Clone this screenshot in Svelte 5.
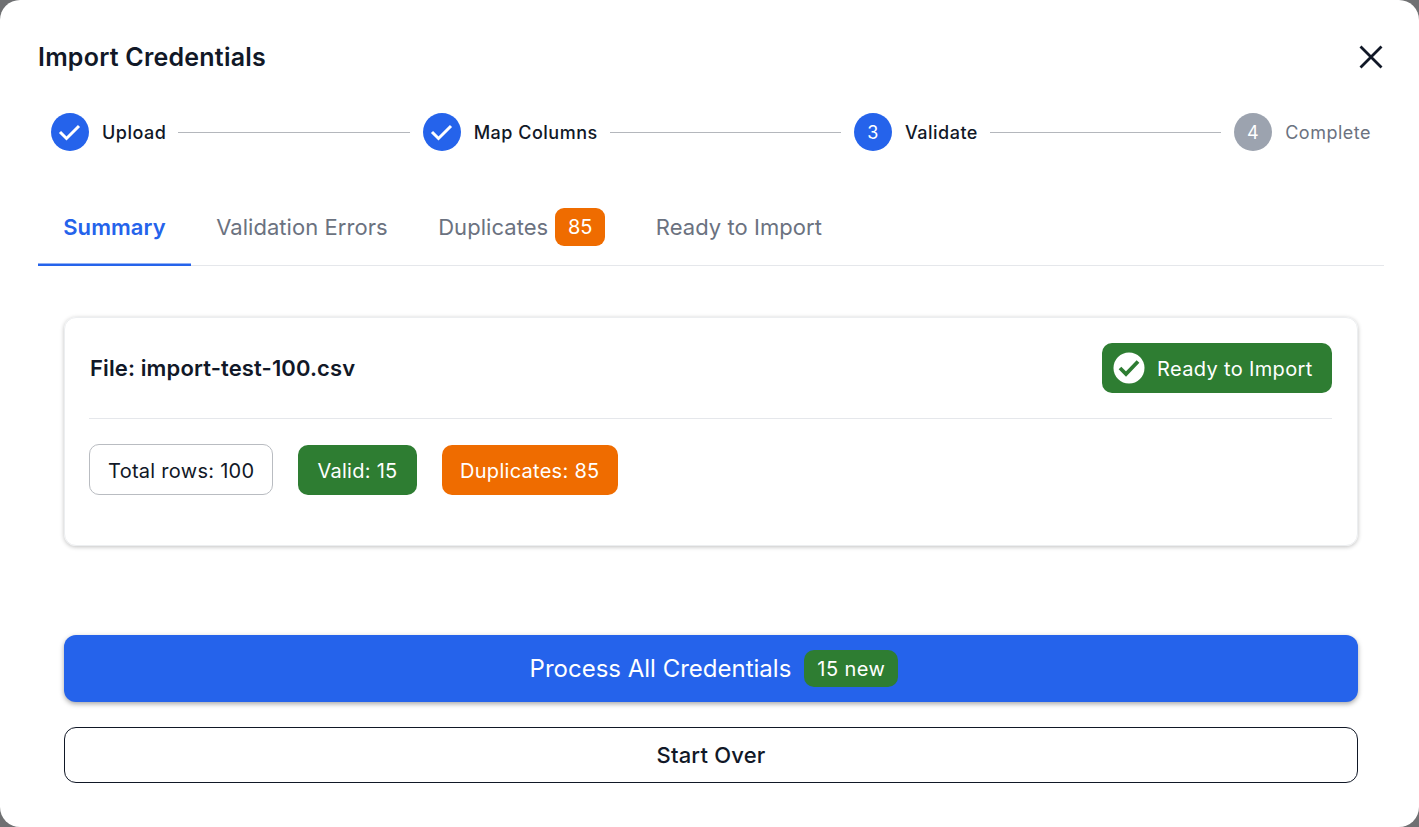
<script>
    const steps = [
        { label: "Upload", state: "done" },
        { label: "Map Columns", state: "done" },
        { label: "Validate", state: "active", num: 3 },
        { label: "Complete", state: "todo", num: 4 },
    ];
    const tabs = [
        { label: "Summary", active: true },
        { label: "Validation Errors" },
        { label: "Duplicates", badge: 85 },
        { label: "Ready to Import" },
    ];
</script>

<div class="backdrop">
    <main class="dialog">
        <header class="title-row">
            <h1>Import Credentials</h1>
            <button class="close" aria-label="Close">
                <svg width="24" height="24" viewBox="0 0 24 24" fill="none" stroke="#111827" stroke-width="2.8">
                    <path d="M1.5 1.5 22.5 22.5M22.5 1.5 1.5 22.5" />
                </svg>
            </button>
        </header>

        <ol class="stepper">
            {#each steps as step, i}
                {#if i > 0}
                    <li class="line" aria-hidden="true"></li>
                {/if}
                <li class="step {step.state}">
                    <span class="circle">
                        {#if step.state === "done"}
                            <svg width="24" height="24" viewBox="0 0 24 24" fill="none" stroke="#fff" stroke-width="3">
                                <path d="M2 12 8.5 18.5 21 6" />
                            </svg>
                        {:else}
                            {step.num}
                        {/if}
                    </span>
                    <span class="step-label">{step.label}</span>
                </li>
            {/each}
        </ol>

        <nav class="tabs">
            {#each tabs as tab}
                <div class="tab" class:active={tab.active}>
                    {tab.label}
                    {#if tab.badge}
                        <span class="tab-badge">{tab.badge}</span>
                    {/if}
                </div>
            {/each}
        </nav>

        <section class="card">
            <div class="card-head">
                <h2>File: import-test-100.csv</h2>
                <div class="ready">
                    <svg width="32" height="32" viewBox="0 0 32 32">
                        <circle cx="16" cy="16" r="15.5" fill="#fff" />
                        <path d="M7 16 13 22 25 9.5" fill="none" stroke="#2e7d32" stroke-width="3.8" />
                    </svg>
                    <span class="ready-text">Ready to Import</span>
                </div>
            </div>
            <div class="chips">
                <span class="chip outline">Total rows: 100</span>
                <span class="chip green">Valid: 15</span>
                <span class="chip orange">Duplicates: 85</span>
            </div>
        </section>

        <div class="actions">
            <button class="primary">
                Process All Credentials
                <span class="new-badge">15 new</span>
            </button>
            <button class="secondary">Start Over</button>
        </div>
    </main>
</div>

<style>
    :global(body) {
        margin: 0;
        font-family: Inter, "Liberation Sans", sans-serif;
    }

    .backdrop {
        background-color: #6f7072;
        height: 827px;
        overflow: hidden;
    }

    .dialog {
        box-sizing: border-box;
        height: 827px;
        background-color: #fff;
        border-radius: 20px;
        padding: 0 35px 0 38px;
        color: #111827;
    }

    .title-row {
        display: flex;
        justify-content: space-between;
        align-items: center;
        height: 113px;
        & h1 {
            margin: 0;
            font-size: 25px;
            font-weight: 600;
            letter-spacing: 0.22px;
        }
    }

    .close {
        display: flex;
        padding: 0;
        margin-right: 1px;
        border: none;
        background: none;
    }

    .stepper {
        display: flex;
        align-items: center;
        list-style: none;
        margin: 0;
        padding: 0 13px;
        height: 38px;
    }

    .step {
        display: flex;
        align-items: center;
        gap: 13px;
        font-size: 18px;
        font-weight: 500;
        letter-spacing: 0.5px;
        & .circle {
            display: flex;
            align-items: center;
            justify-content: center;
            width: 38px;
            height: 38px;
            border-radius: 50%;
            background-color: #2563eb;
            color: #fff;
            font-size: 18px;
            font-weight: 400;
        }
        &.todo .circle {
            background-color: #9ca3af;
        }
        &.todo .step-label {
            color: #6b7280;
            font-weight: 400;
        }
    }

    .line {
        flex: 1;
        height: 1px;
        margin: 0 13px 0 12px;
        background-color: #b4b7bc;
    }

    .tabs {
        display: flex;
        margin-top: 38px;
        height: 77px;
        box-sizing: border-box;
        border-bottom: 1px solid #e5e7eb;
    }

    .tab {
        display: flex;
        align-items: center;
        gap: 7px;
        padding: 0 25.25px;
        font-size: 22px;
        color: #6b7280;
        letter-spacing: 0.05px;
        &.active {
            box-sizing: border-box;
            color: #2563eb;
            font-weight: 600;
            box-shadow: inset 0 -2.5px 0 #2563eb;
            height: 77px;
            padding-bottom: 1px;
        }
    }

    .tab-badge {
        display: flex;
        align-items: center;
        justify-content: center;
        width: 50px;
        height: 38px;
        border-radius: 9px;
        background-color: #ef6c00;
        color: #fff;
        font-size: 20px;
    }

    .card {
        box-sizing: border-box;
        height: 229px;
        margin: 51px 26px 0;
        padding: 0 25px 0 24px;
        border-radius: 12px;
        border: 1px solid #eceef0;
        box-shadow: 0 1px 4px rgba(0, 0, 0, 0.25);
    }

    .card-head {
        display: flex;
        justify-content: space-between;
        align-items: center;
        height: 100px;
        border-bottom: 1px solid #e5e7eb;
        & h2 {
            margin: 0 0 0 1px;
            font-size: 22px;
            font-weight: 600;
            letter-spacing: 0.12px;
        }
    }

    .ready {
        display: flex;
        align-items: center;
        gap: 12px;
        box-sizing: border-box;
        width: 230px;
        height: 50px;
        padding-left: 11px;
        border-radius: 10px;
        background-color: #2e7d32;
        color: #fff;
        font-size: 20px;
        letter-spacing: 0.35px;
    }

    .ready-text {
        padding-top: 2px;
    }

    .chips {
        display: flex;
        gap: 25px;
        margin-top: 25px;
        align-items: flex-end;
    }

    .chip {
        display: flex;
        align-items: center;
        box-sizing: border-box;
        height: 50px;
        padding: 2px 19px 0;
        border-radius: 10px;
        font-size: 20px;
        letter-spacing: 0.28px;
        &.outline {
            height: 51px;
            padding: 2px 18px 0;
            border: 1px solid #b9bcc1;
        }
        &.green {
            background-color: #2e7d32;
            color: #fff;
        }
        &.orange {
            padding: 2px 18.5px 0;
            background-color: #ef6c00;
            color: #fff;
        }
    }

    .actions {
        display: flex;
        flex-direction: column;
        gap: 25px;
        margin: 89px 26px 0;
        & button {
            font-family: inherit;
            display: flex;
            align-items: center;
            justify-content: center;
            width: 100%;
            border-radius: 12px;
        }
    }

    .primary {
        height: 67px;
        gap: 13px;
        padding-left: 12px;
        border: none;
        background-color: #2563eb;
        color: #fff;
        font-size: 24px;
        box-shadow: 0 2px 5px rgba(0, 0, 0, 0.35);
    }

    .new-badge {
        display: flex;
        align-items: center;
        height: 37px;
        padding: 0 13px;
        border-radius: 10px;
        background-color: #2e7d32;
        font-size: 20px;
        letter-spacing: 0.45px;
    }

    .secondary {
        height: 56px;
        border: 1px solid #111827;
        background-color: #fff;
        color: #111827;
        font-size: 22px;
        font-weight: 500;
        letter-spacing: 0.2px;
    }
</style>
